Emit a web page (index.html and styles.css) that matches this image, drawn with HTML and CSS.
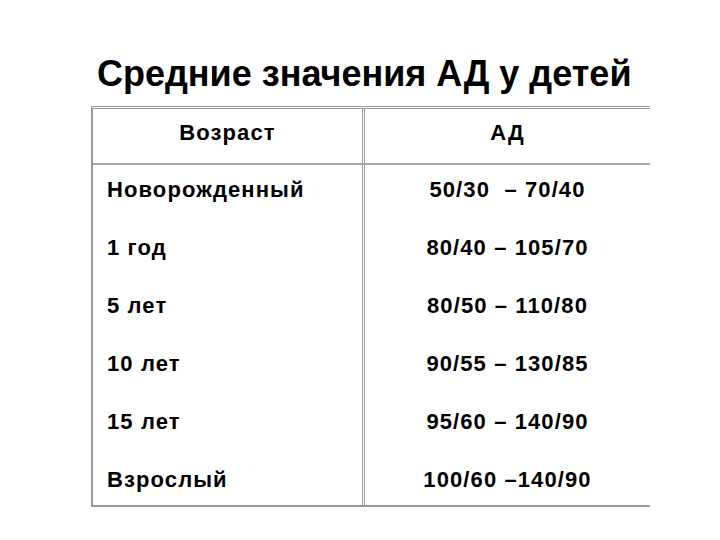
FILE: index.html
```html
<!DOCTYPE html>
<html lang="ru">
<head>
<meta charset="utf-8">
<link rel="stylesheet" href="styles.css">
</head>
<body>
<div class="slide">
  <h1 class="title">Средние значения АД у детей</h1>
  <div class="table">
    <div class="row head">
      <div class="cell left">Возраст</div>
      <div class="cell right">АД</div>
    </div>
    <div class="row">
      <div class="cell left">Новорожденный</div>
      <div class="cell right">50/30&nbsp; – 70/40</div>
    </div>
    <div class="row">
      <div class="cell left">1 год</div>
      <div class="cell right">80/40 – 105/70</div>
    </div>
    <div class="row">
      <div class="cell left">5 лет</div>
      <div class="cell right">80/50 – 110/80</div>
    </div>
    <div class="row">
      <div class="cell left">10 лет</div>
      <div class="cell right">90/55 – 130/85</div>
    </div>
    <div class="row">
      <div class="cell left">15 лет</div>
      <div class="cell right">95/60 – 140/90</div>
    </div>
    <div class="row">
      <div class="cell left">Взрослый</div>
      <div class="cell right">100/60 –140/90</div>
    </div>
  </div>
</div>
</body>
</html>
```

FILE: styles.css
```css
html, body {
  margin: 0;
  padding: 0;
  background: #fff;
}
.slide {
  width: 720px;
  height: 540px;
  font-family: "Liberation Sans", Arial, sans-serif;
  color: #000;
  font-weight: bold;
  display: flex;
  flex-direction: column;
  align-items: flex-start;
}
.title {
  margin: 53px 0 0 97px;
  font-size: 36px;
  line-height: 42px;
  font-weight: bold;
  white-space: nowrap;
}
.table {
  margin: 11px 0 0 91px;
  width: 557px;
  height: 396px;
  overflow: hidden;
  border-top: 3px double #9a9a9a;
  border-left: 2px solid #9a9a9a;
  border-bottom: 2px solid #9a9a9a;
  display: flex;
  flex-direction: column;
}
.row {
  flex: none;
  height: 58px;
  display: grid;
  grid-template-columns: 272px 1fr;
  font-size: 22px;
  letter-spacing: 1.1px;
  line-height: 24px;
}
.row:last-child {
  height: 50px;
}
.row.head {
  height: 54px;
  border-bottom: 2px solid #a8a8a8;
}
.cell {
  display: flex;
  align-items: flex-start;
  padding-top: 13px;
}
.head .cell {
  padding-top: 12px;
}
.left {
  padding-left: 14px;
  border-right: 3px double #9a9a9a;
}
.right {
  justify-content: center;
}
.head .left {
  justify-content: center;
  padding-left: 0;
}
```
